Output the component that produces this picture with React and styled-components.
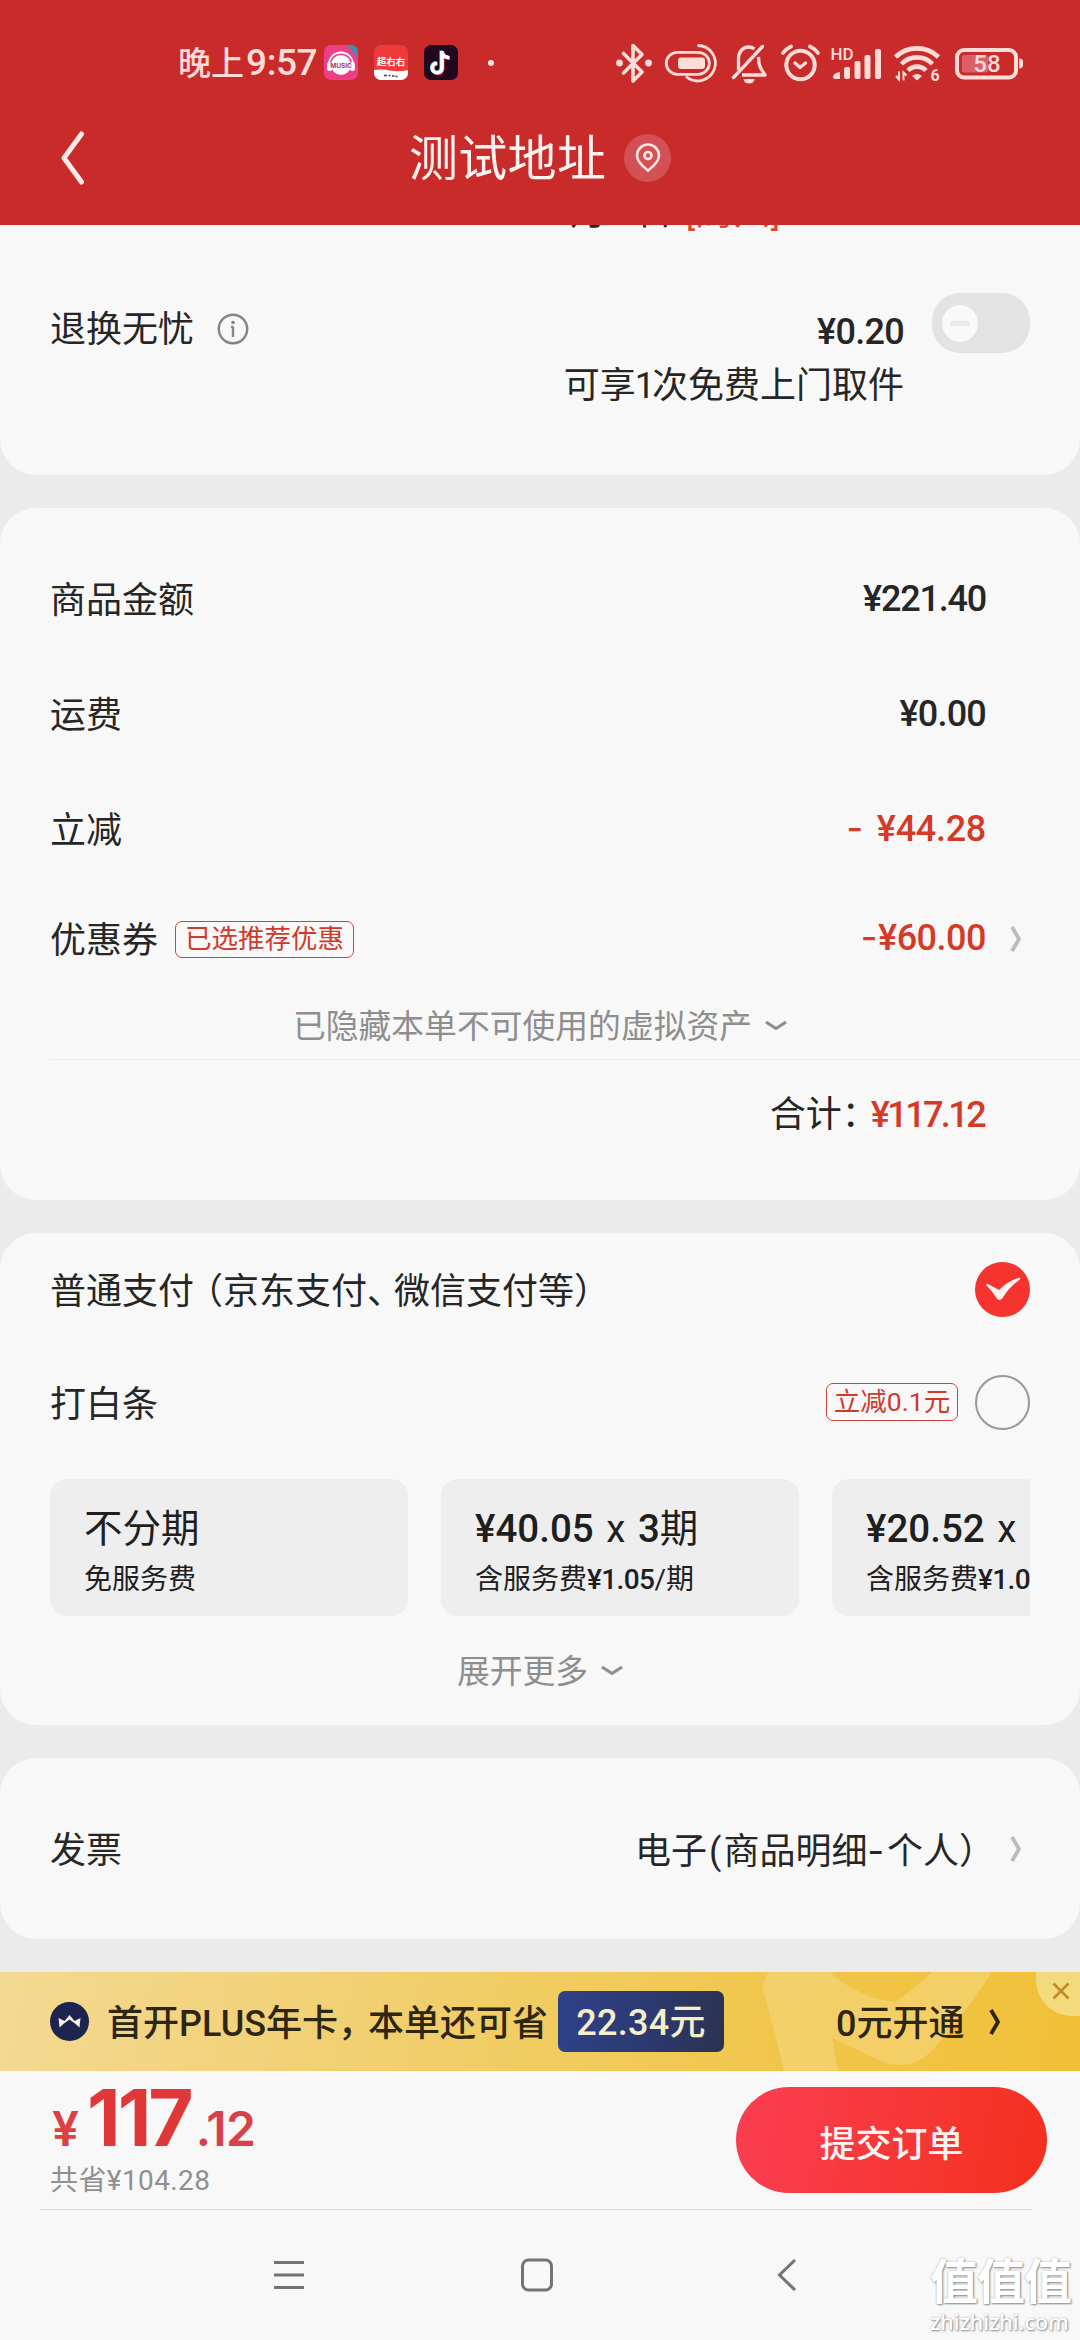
import React from 'react'
import styled, { createGlobalStyle } from 'styled-components'

const GlobalStyle = createGlobalStyle`
  * {
    box-sizing: border-box;
  }

  body {
    margin: 0;
    background: #ebebeb;
    font-family: Roboto, "Noto Sans CJK SC", sans-serif;
    color: #262626;
  }
`;

const Page = styled.div`
  position: relative;
  width: 1080px;
  height: 2340px;
  overflow: hidden;
  display: flex;
  flex-direction: column;
  background: #ebebeb;
`;

const Header = styled.header`
  height: 225px;
  flex-shrink: 0;
  background: #c92a2a;
  color: #fff3f0;
`;

const StatusBar = styled.div`
  height: 91px;
  padding: 34px 56px 0 178px;
  display: flex;
  align-items: center;
  justify-content: space-between;
  color: #ffdcd8;
`;

const StatusGroup = styled.div`
  display: flex;
  align-items: center;
  gap: ${props => props.$gap}px;

  svg {
    display: block;
    overflow: visible;
  }
`;

const Time = styled.span`
  width: 138px;
  margin-right: -8px;
  padding-top: 2px;
  font-size: 33px;
  line-height: 40px;
  font-weight: 500;
  white-space: nowrap;

  b {
    font-weight: 500;
    font-size: 37px;
    letter-spacing: -0.4px;
    margin-left: 2px;
  }
`;

const Dot = styled.span`
  width: 6px;
  height: 6px;
  margin-left: 14px;
  border-radius: 50%;
  background: #ffe6e2;
`;

const TitleBar = styled.div`
  height: 134px;
  display: grid;
  grid-template-columns: 409px auto 408px;
  align-items: center;

  > svg {
    margin-left: 60px;
  }
`;

const Title = styled.h1`
  margin: 0;
  padding-top: 4px;
  display: flex;
  align-items: center;
  gap: 18px;
  font-size: 49px;
  line-height: 60px;
  letter-spacing: 0.3px;
  font-weight: 400;
  white-space: nowrap;
`;

const PinBadge = styled.span`
  display: flex;
  align-items: center;
  justify-content: center;
  width: 47px;
  height: 48px;
  margin-top: -4px;
  border-radius: 50%;
  background: #d35055;
`;

const Card = styled.section`
  height: ${props => props.$height}px;
  flex-shrink: 0;
  margin-bottom: 33px;
  padding: ${props => props.$top || 0}px 50px 0;
  border-radius: ${props => (props.$first ? '0 0 36px 36px' : '36px')};
  background: #f8f8f8;
`;

const Peek = styled.div`
  height: 10px;
  padding-left: 500px;
  overflow: hidden;
  font-size: 36px;
  line-height: 36px;

  p {
    margin: -30px 0 0;
    white-space: nowrap;
  }

  em {
    margin-left: 13px;
    font-style: normal;
    letter-spacing: 1.2px;
    color: #e0452f;
  }
`;

const ServiceRow = styled.div`
  margin-top: 69px;
  display: flex;
  align-items: flex-start;
  font-size: 36px;
  line-height: 54px;
`;

const ServiceLabel = styled.div`
  flex: 1;
  padding-top: 1px;
  display: flex;
  align-items: center;
  gap: 23px;
  line-height: 50px;

  svg {
    margin-top: -3px;
  }
`;

const ServiceValue = styled.div`
  padding-top: 1px;
  text-align: right;
  margin-right: 28px;
`;

const Switch = styled.div`
  width: 98px;
  height: 60px;
  margin-top: -11px;
  padding: 0 10px;
  display: flex;
  align-items: center;
  border-radius: 28px;
  background: #e3e3e3;
`;

const Knob = styled.span`
  width: 36px;
  height: 37px;
  display: flex;
  align-items: center;
  justify-content: center;
  border-radius: 50%;
  background: #f9f9f9;

  &::after {
    content: '';
    width: 20px;
    height: 5px;
    background: #ebebeb;
  }
`;

const Row = styled.div`
  height: ${props => props.$height}px;
  display: flex;
  align-items: center;
  font-size: 36px;
  line-height: 50px;
  white-space: nowrap;
`;

const Label = styled.div`
  flex: 1;
  padding-top: ${props => props.$drop || 3}px;
  display: flex;
  align-items: center;
`;

const RowText = styled.span`
  padding-top: 5px;
  margin-right: -2px;
`;

const Price = styled.span`
  padding-bottom: ${props => props.$lift || 0}px;
  font-size: 36px;
  font-weight: 500;
  letter-spacing: ${props => props.$spacing || -0.7}px;
  color: ${props => (props.$red ? '#d43a26' : '#262626')};
`;

const Dash = styled.span`
  font-family: Inter, sans-serif;
  letter-spacing: ${props => props.$by || 0}px;
`;

const ArrowSlot = styled.span`
  width: ${props => props.$width || 44}px;
  padding-right: 8px;
  display: flex;
  justify-content: flex-end;
`;

const Tag = styled.span`
  height: ${props => props.$height}px;
  width: ${props => props.$width}px;
  display: flex;
  align-items: center;
  justify-content: center;
  border: 1.5px solid #cf4238;
  border-radius: 7px;
  color: #cf3a2c;
  font-size: 26.5px;
  line-height: 30px;
`;

const CouponTag = styled(Tag)`
  margin: -3px 0 0 17px;
`;

const More = styled.div`
  height: ${props => props.$height}px;
  padding-top: 3px;
  display: flex;
  align-items: center;
  justify-content: center;
  gap: 13px;
  font-size: 32.8px;
  line-height: 44px;
  color: #8e8e8e;

  svg {
    margin-top: -2px;
  }
`;

const Divider = styled.hr`
  height: 1px;
  margin: 0 ${props => props.$right}px 0 ${props => props.$left}px;
  border: none;
  background: ${props => props.$color};
`;

const Total = styled(Row)`
  justify-content: flex-end;
  padding: 3px 46px 0 0;
`;

const Narrow = styled.span`
  margin-left: ${props => props.$shift || 0}px;
  letter-spacing: ${props => props.$by}px;
`;

const Radio = styled.span`
  width: 55px;
  height: 55px;
  display: flex;
  align-items: center;
  justify-content: center;
  border-radius: 50%;
  border: ${props => (props.$checked ? 'none' : '2px solid #989898')};
  background: ${props => (props.$checked ? '#f5332f' : 'transparent')};
`;

const Plans = styled.div`
  margin-top: 20px;
  display: flex;
  gap: 33px;
  overflow: hidden;
`;

const Plan = styled.div`
  width: 358px;
  height: 137px;
  flex-shrink: 0;
  padding: 24px 34px 0;
  border-radius: 17px;
  background: #eeeeee;
  color: #1f1f1f;
  white-space: nowrap;
`;

const PlanTitle = styled.div`
  font-size: 38.5px;
  line-height: 52px;
  word-spacing: 3px;

  b {
    font-weight: 500;
  }
`;

const PlanNote = styled.div`
  font-size: 28px;
  line-height: 50px;

  b {
    font-weight: 500;
    letter-spacing: -0.6px;
  }
`;

const Banner = styled.div`
  position: relative;
  height: 99px;
  flex-shrink: 0;
  padding-left: 50px;
  display: flex;
  align-items: center;
  background: linear-gradient(100deg, #f3da92 0%, #f2d27a 25%, #f1cc60 50%, #f0c548 75%, #f0c038 100%);
  font-size: 36px;
  font-weight: 500;
  line-height: 50px;
  color: #2e2614;
  white-space: nowrap;
`;

const BannerGlow = styled.svg`
  position: absolute;
  left: 760px;
  top: 0;
`;

const BannerText = styled.span`
  width: 451px;
  margin-left: 18px;
  padding-top: 4px;
`;

const Saving = styled.span`
  position: relative;
  width: 166px;
  height: 61px;
  padding-top: 3px;
  display: flex;
  align-items: center;
  justify-content: center;
  border-radius: 7px;
  background: linear-gradient(100deg, #2f428a 0%, #2b3a72 50%, #2b3350 100%);
  color: #f6eecb;
  letter-spacing: 0.3px;
`;

const OpenLink = styled.span`
  position: relative;
  margin-left: 112px;
  padding-top: 4px;
  display: flex;
  align-items: center;
  gap: 25px;

  svg {
    margin-top: -4px;
  }
`;

const CloseCorner = styled.span`
  position: absolute;
  top: 0;
  right: 0;
  width: 44px;
  height: 44px;
  padding: 10px 0 0 16px;
  border-bottom-left-radius: 36px;
  background: #f3da7c;

  svg {
    display: block;
  }
`;

const Footer = styled.div`
  height: 138px;
  flex-shrink: 0;
  padding: 16px 33px 0 50px;
  display: flex;
  justify-content: space-between;
  background: #f8f8f8;
`;

const PayPrice = styled.div`
  height: 81px;
  margin-top: -6px;
  display: flex;
  align-items: baseline;
  font-family: Inter, Roboto, sans-serif;
  font-weight: 700;
  line-height: 73px;
  color: #e03838;
`;

const Yuan = styled.span`
  margin-left: 2px;
  font-size: 48px;
  font-weight: 600;
  color: #dc4040;
`;

const PayInt = styled.span`
  margin-left: 8px;
  font-size: 78px;
  letter-spacing: -3px;
`;

const PayCents = styled.span`
  margin-left: 5px;
  font-size: 48px;
  font-weight: 600;
  letter-spacing: -0.5px;
  color: #d8404a;
`;

const Saved = styled.div`
  font-size: 28px;
  line-height: 38px;
  letter-spacing: 0.4px;
  color: #8f8f8f;
`;

const SubmitButton = styled.button`
  width: 311px;
  height: 106px;
  padding-top: 2px;
  border: none;
  border-radius: 53px;
  background: linear-gradient(100deg, #fa3e52 0%, #f63838 50%, #f4301c 100%);
  color: #fff4f1;
  font-family: inherit;
  font-size: 36px;
  font-weight: 500;
`;

const NavBar = styled.nav`
  flex: 1;
  background: #f8f8f8;
`;

const NavButtons = styled.div`
  display: grid;
  grid-template-columns: 248px 248px 252px;
  justify-content: center;
  justify-items: center;
  padding: 48px 2px 0 0;
`;

const Watermark = styled.div`
  position: absolute;
  left: 930px;
  top: 2254px;
  width: 145px;
  color: #ffffff;
  text-shadow: 1px 1px 2px #8a8a8a, 0 0 2px #b5b5b5;
  white-space: nowrap;

  strong {
    display: block;
    font-size: 48px;
    line-height: 58px;
    font-weight: 700;
    letter-spacing: -1px;
  }

  span {
    display: block;
    font-family: "Noto Sans", sans-serif;
    font-size: 21.5px;
    line-height: 20px;
    font-weight: 500;
  }
`;

const MusicIcon = () => (
  <svg width="34" height="35" viewBox="0 0 34 35">
    <rect width="34" height="35" rx="7" fill="#ee3f86" />
    <path d="M22 0h5a7 7 0 0 1 7 7v6z" fill="#4a86b8" />
    <circle cx="17" cy="20" r="10" fill="#fff" />
    <path d="M5 20v-1a12 11.500 0 0 1 24 0v1" fill="none" stroke="#fff" strokeWidth="1.800" />
    <rect x="3" y="17" width="5" height="9" rx="2.500" fill="#fff" />
    <rect x="26" y="17" width="5" height="9" rx="2.500" fill="#fff" />
    <text x="17" y="22.500" fontSize="6.500" fontWeight="700" textAnchor="middle" fill="#a8326a" fontFamily="Inter">MUSIC</text>
  </svg>
)

const ShopIcon = () => (
  <svg width="34" height="35" viewBox="0 0 34 35">
    <rect width="34" height="35" rx="7" fill="#ee3a3a" />
    <path d="M0 25q8-1.500 17 .8q9 1.200 17-.8v3a7 7 0 0 1-7 7h-20a7 7 0 0 1-7-7z" fill="#fff" />
    <text x="17" y="19.500" fontSize="9.500" fontWeight="700" textAnchor="middle" fill="#fff" fontFamily="Noto Sans CJK SC">超右右</text>
    <path d="M10 30.500h3m1.500 0h2m1.500 .6h2.500m1 .4h2" stroke="#4a3a3a" strokeWidth="1.500" />
  </svg>
)

const TiktokIcon = () => (
  <svg width="34" height="35" viewBox="0 0 34 35">
    <rect width="34" height="35" rx="7" fill="#22081e" />
    <g fill="none" strokeWidth="3.600">
      <path d="M17.200 5.500v17a4.800 4.800 0 1 1-5-4.800M17.200 7c.8 3 3.500 5 7 5.200" stroke="#3fd8d8" />
      <path d="M18.800 6.500v17a4.800 4.800 0 1 1-5-4.800M18.800 8c.8 3 3.500 5 7 5.200" stroke="#e8385a" />
      <path d="M18 6v17a4.800 4.800 0 1 1-5-4.800M18 7.500c.8 3 3.500 5 7.500 5.200" stroke="#fff" />
    </g>
  </svg>
)

const BluetoothIcon = () => (
  <svg width="36" height="40" viewBox="616 42 36 40" fill="none" stroke="currentColor" strokeWidth="3.600">
    <path d="M623.500 52.500l18.500 18.500-9 9V44.500l9 9-18.500 18.500" strokeLinejoin="round" strokeLinecap="round" />
    <circle cx="619.500" cy="62" r="3.400" fill="currentColor" stroke="none" />
    <circle cx="648.500" cy="62" r="3.400" fill="currentColor" stroke="none" />
  </svg>
)

const CapsuleIcon = () => (
  <svg width="55" height="40" viewBox="664 42 55 40" fill="none" stroke="currentColor" strokeWidth="2.800">
    <rect x="666.300" y="51.300" width="43" height="22" rx="11" />
    <rect x="678" y="56.500" width="27" height="11.500" rx="3" fill="currentColor" stroke="none" />
    <path d="M697.500 44.500a17.700 17.700 0 1 1-11.500 31" />
  </svg>
)

const BellOffIcon = () => (
  <svg width="37" height="40" viewBox="731 42 37 40" fill="none" stroke="currentColor" strokeWidth="3.300">
    <path d="M733.500 76.500l29-31" strokeLinecap="round" />
    <path d="M738.500 69V58c0-7 4-12 10-12 2.500 0 4.500.8 6 2M758.500 56c.4 4 .2 7 1.500 9.500 1.500 3.500 3.500 6 5 8.500h-23" strokeLinejoin="round" />
    <path d="M743.500 78h11a5.500 4.500 0 0 1-11 0z" fill="currentColor" stroke="none" />
  </svg>
)

const AlarmIcon = () => (
  <svg width="39" height="40" viewBox="780 42 39 40" fill="none" stroke="currentColor" strokeWidth="4">
    <circle cx="800.500" cy="64" r="14.200" />
    <path d="M783 52a20 20 0 0 1 8-6.500M818 52a20 20 0 0 0-8-6.500" strokeLinecap="round" strokeWidth="3.800" />
    <path d="M795 62l5 4.500 5.500-4.500" strokeWidth="3.300" strokeLinecap="round" strokeLinejoin="round" />
  </svg>
)

const SignalIcon = () => (
  <svg width="51" height="40" viewBox="831 42 51 40" fill="currentColor">
    <text x="830.500" y="58.500" fontSize="17" fontWeight="500" fontFamily="Roboto">HD</text>
    <path d="M833 76q0-4 7-5v7h-5q-2 0-2-2z" />
    <rect x="844" y="66" width="6" height="12" rx="2" />
    <rect x="854.500" y="60" width="6" height="18" rx="2" />
    <rect x="864.500" y="54" width="6" height="24" rx="2" />
    <rect x="875" y="48" width="6" height="30" rx="2" />
  </svg>
)

const WifiIcon = () => (
  <svg width="49" height="40" viewBox="894 42 49 40" fill="none" stroke="currentColor" strokeWidth="4.600">
    <path d="M895.500 56a31 31 0 0 1 43 0" />
    <path d="M901.500 63a21.500 21.500 0 0 1 31 0" />
    <path d="M908 69.500a12.500 12.500 0 0 1 18 0" />
    <path d="M912 75q5-4 10 0l-5 4.500z" fill="currentColor" stroke="none" />
    <path d="M896 75l3 3.500V70.500M903.500 79.500v-8l3 3" strokeWidth="2" />
    <text x="930.500" y="80" fontSize="16" fontWeight="700" fill="currentColor" stroke="none" fontFamily="Roboto">6</text>
  </svg>
)

const BatteryIcon = () => (
  <svg width="69" height="40" viewBox="955 42 69 40">
    <rect x="957" y="49" width="59" height="27.500" rx="7" fill="none" stroke="currentColor" strokeWidth="4" />
    <rect x="962" y="54" width="26" height="17.500" rx="2" fill="#dc6068" />
    <path d="M1019 57.500q4 0 4 3v4q0 3-4 3z" fill="currentColor" />
    <text x="987" y="71" fontSize="24" fontWeight="500" textAnchor="middle" fill="currentColor" fontFamily="Roboto">58</text>
  </svg>
)

const RightArrow = ({ color = '#bcbcbc' }) => (
  <svg width="12" height="28" viewBox="0 0 12 28" fill="none" stroke={color} strokeWidth="3.800">
    <path d="M2 2l7 12-7 12" strokeLinejoin="round" />
  </svg>
)

const DownArrow = () => (
  <svg width="22" height="12" viewBox="0 0 22 12" fill="none" stroke="#8e8e8e" strokeWidth="3.200">
    <path d="M1 2l10 6.500L21 2" strokeLinejoin="round" />
  </svg>
)

const InfoIcon = () => (
  <svg width="32" height="32" viewBox="0 0 32 32" fill="none" stroke="#858585" strokeWidth="2.400">
    <circle cx="16" cy="16" r="14.200" />
    <path d="M16 13.500V24M14 14h2" />
    <circle cx="16" cy="9.500" r="1.800" fill="#858585" stroke="none" />
  </svg>
)

const amounts = [
  { label: '商品金额', value: '¥221.40', spacing: -1.2 },
  { label: '运费', value: '¥0.00', spacing: -0.8 },
  { label: '立减', value: <><Dash $by={2}>- </Dash>¥44.28</>, spacing: -0.3, red: true },
]

const App = () => {
  return (
    <Page>
      <GlobalStyle />
      <Header>
        <StatusBar>
          <StatusGroup $gap={16}>
            <Time>晚上<b>9:57</b></Time>
            <MusicIcon />
            <ShopIcon />
            <TiktokIcon />
            <Dot />
          </StatusGroup>
          <StatusGroup $gap={12}>
            <BluetoothIcon />
            <CapsuleIcon />
            <BellOffIcon />
            <AlarmIcon />
            <SignalIcon />
            <WifiIcon />
            <BatteryIcon />
          </StatusGroup>
        </StatusBar>
        <TitleBar>
          <svg width="26" height="54" viewBox="0 0 26 54" fill="none" stroke="#ffe9e4" strokeWidth="5">
            <path d="M21.500 3L4 27l17.500 24" strokeLinecap="round" strokeLinejoin="round" />
          </svg>
          <Title>
            测试地址
            <PinBadge>
              <svg width="26" height="30" viewBox="0 0 26 30" fill="none" stroke="#ffe6e2" strokeWidth="2.600">
                <path d="M13 27.500C7 23 2 18 2 12.500a11 11 0 0 1 22 0C24 18 19 23 13 27.500z" />
                <circle cx="13" cy="12.500" r="3.500" />
              </svg>
            </PinBadge>
          </Title>
        </TitleBar>
      </Header>

      <Card $height={250} $first>
        <Peek>
          <p>9月<Narrow $by={-5}>30</Narrow>日<em>[周六]</em></p>
        </Peek>
        <ServiceRow>
          <ServiceLabel>
            退换无忧
            <InfoIcon />
          </ServiceLabel>
          <ServiceValue>
            <Price>¥0.20</Price>
            <div>可享<Narrow $shift={-1} $by={-3}>1</Narrow>次免费上门取件</div>
          </ServiceValue>
          <Switch><Knob /></Switch>
        </ServiceRow>
      </Card>

      <Card $height={692} $top={34}>
        {amounts.map(item => (
          <Row key={item.label} $height={115}>
            <Label>{item.label}</Label>
            <Price $red={item.red} $lift={2} $spacing={item.spacing}>{item.value}</Price>
            <ArrowSlot />
          </Row>
        ))}
        <Row $height={104}>
          <Label>
            优惠券
            <CouponTag $width={179} $height={37}>已选推荐优惠</CouponTag>
          </Label>
          <Price $red $lift={3} $spacing={-0.5}><Dash $by={0.5}>-</Dash>¥60.00</Price>
          <ArrowSlot><RightArrow /></ArrowSlot>
        </Row>
        <More $height={68}>
          已隐藏本单不可使用的虚拟资产
          <DownArrow />
        </More>
        <Divider $left={0} $right={-50} $color="#ececec" />
        <Total $height={106}>
          合计<Narrow $by={-7}>：</Narrow><Price $red $spacing={-2.6}>¥117.12</Price>
        </Total>
      </Card>

      <Card $height={492}>
        <Row $height={112}>
          <Label $drop={5}>
            普通支付<Narrow $shift={-7} $by={0}>（</Narrow>京东支付<Narrow $by={-9}>、</Narrow>微信支付等）
          </Label>
          <Radio $checked>
            <svg width="36" height="24" viewBox="0 0 36 24">
              <path d="M1 8q1-1.500 3-.5l10 5.500Q22 4.500 34 .8q2 0 1 1.700Q24 10 17.500 21q-3 4-6 0Q7 13.500 1 8z" fill="#fff3f0" />
            </svg>
          </Radio>
        </Row>
        <Row $height={114}>
          <Label $drop={5}>打白条</Label>
          <Tag $width={132} $height={38}>立减0.1元</Tag>
          <ArrowSlot $width={17} />
          <Radio />
        </Row>
        <Plans>
          <Plan>
            <PlanTitle>不分期</PlanTitle>
            <PlanNote>免服务费</PlanNote>
          </Plan>
          <Plan>
            <PlanTitle><b>¥40.05</b> x <b>3</b>期</PlanTitle>
            <PlanNote>含服务费<b>¥1.05</b>/期</PlanNote>
          </Plan>
          <Plan>
            <PlanTitle><b>¥20.52</b> x <b>6</b>期</PlanTitle>
            <PlanNote>含服务费<b>¥1.02</b>/期</PlanNote>
          </Plan>
        </Plans>
        <More $height={109}>
          展开更多
          <DownArrow />
        </More>
      </Card>

      <Card $height={181}>
        <Row $height={181}>
          <Label $drop={5}>发票</Label>
          <RowText>
            电子<Narrow $shift={2} $by={2}>(</Narrow>商品明细<Dash $by={3}>-</Dash>个人<Narrow $by={-9}>）</Narrow>
          </RowText>
          <ArrowSlot $width={46}><RightArrow /></ArrowSlot>
        </Row>
      </Card>

      <Banner>
        <BannerGlow width="320" height="99" viewBox="0 0 320 99">
          <path d="M3 18Q3 4 10 0H70Q98 26 136 30Q160 12 172 0H232Q200 48 176 74Q150 106 110 84Q90 74 72 66L78 99H24Q14 56 3 18z" fill="#f5d679" opacity="0.65" />
        </BannerGlow>
        <svg width="39" height="39" viewBox="0 0 39 39">
          <circle cx="19.500" cy="19.500" r="19.500" fill="#1d2450" />
          <path d="M9.500 25.500L8.500 16l6 3 5-6 5 6 6-3-1 9.500-4.500-4-5.500-4-5.500 4z" fill="#f6f0e0" />
        </svg>
        <BannerText>首开PLUS年卡<Narrow $by={-6}>，</Narrow>本单还可省</BannerText>
        <Saving>22.34元</Saving>
        <OpenLink>
          0元开通
          <RightArrow color="#2e2614" />
        </OpenLink>
        <CloseCorner>
          <svg width="18" height="18" viewBox="0 0 18 18" stroke="#c08a28" strokeWidth="2.600">
            <path d="M1.500 1.500l15 15M16.500 1.500l-15 15" />
          </svg>
        </CloseCorner>
      </Banner>

      <Footer>
        <div>
          <PayPrice>
            <Yuan>¥</Yuan>
            <PayInt>117</PayInt>
            <PayCents>.12</PayCents>
          </PayPrice>
          <Saved>共省¥104.28</Saved>
        </div>
        <SubmitButton>提交订单</SubmitButton>
      </Footer>

      <NavBar>
        <Divider $left={40} $right={48} $color="#dcdcdc" />
        <NavButtons>
          <svg width="34" height="34" viewBox="0 0 34 34" stroke="#737373" strokeWidth="3">
            <path d="M2 4.500h30M2 17h30M2 29.500h30" />
          </svg>
          <svg width="34" height="34" viewBox="0 0 34 34" fill="none" stroke="#737373" strokeWidth="3">
            <rect x="2.500" y="2" width="29" height="30" rx="6" />
          </svg>
          <svg width="34" height="34" viewBox="0 0 34 34" fill="none" stroke="#737373" strokeWidth="3">
            <path d="M25 2L9.500 17 25 32" />
          </svg>
        </NavButtons>
      </NavBar>

      <Watermark>
        <strong>值值值</strong>
        <span>zhizhizhi.com</span>
      </Watermark>
    </Page>
  )
}

export default App;
